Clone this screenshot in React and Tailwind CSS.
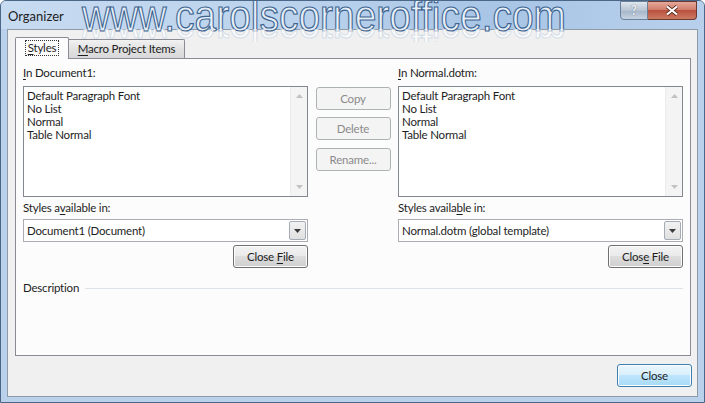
import React from "react";

const U = ({ children }) => <span className="underline underline-offset-[2px]">{children}</span>;

function Btn({ children, disabled, def, className = "" }) {
  if (disabled)
    return (
      <div className={"w-[75px] h-[23px] flex items-center justify-center rounded-[3px] border border-[#adb2b5] bg-[#f4f4f4] text-[#8b8b8b] " + className}>
        {children}
      </div>
    );
  return (
    <div
      className={
        "w-[75px] h-[23px] flex items-center justify-center rounded-[3px] border text-[#1e1e1e] shadow-[inset_0_0_0_1px_#fcfcfc] " +
        (def
          ? "border-[#3c7fb1] bg-[linear-gradient(#eaf6fd_0%,#d9f0fc_45%,#bee6fd_50%,#a7d9f5_100%)] "
          : "border-[#707070] bg-[linear-gradient(#f2f2f2_0%,#ebebeb_45%,#dddddd_50%,#cfcfcf_100%)] ") +
        className
      }
    >
      {children}
    </div>
  );
}

function ListBox() {
  return (
    <div className="w-[285px] h-[111px] border border-[#828790] bg-white flex">
      <div className="flex-1 pl-[3px] pt-[2px] leading-[13px] text-[#1e1e1e]">
        <div>Default Paragraph Font</div>
        <div>No List</div>
        <div>Normal</div>
        <div>Table Normal</div>
      </div>
      <div className="w-[17px] h-full bg-[#f4f4f4] border-l border-[#ececec] flex flex-col items-center justify-between py-[7px]">
        <svg width="7" height="4" viewBox="0 0 7 4"><path d="M0 4 L3.5 0 L7 4 Z" fill="#c2c2c2" /></svg>
        <svg width="7" height="4" viewBox="0 0 7 4"><path d="M0 0 L3.5 4 L7 0 Z" fill="#c2c2c2" /></svg>
      </div>
    </div>
  );
}

function Combo({ text }) {
  return (
    <div className="w-[285px] h-[23px] border border-[#abadb3] bg-white flex items-center">
      <div className="flex-1 pl-[3px] text-[#1e1e1e]">{text}</div>
      <div className="w-[17px] h-[19px] mr-[1px] border border-[#a5acb5] rounded-[2px] bg-[linear-gradient(#f2f2f2,#e0e0e0)] flex items-center justify-center">
        <svg width="7" height="4" viewBox="0 0 7 4"><path d="M0 0 L3.5 4 L7 0 Z" fill="#3c3c3c" /></svg>
      </div>
    </div>
  );
}

function Side({ label, avail, text, close }) {
  return (
    <div className="w-[285px] flex flex-col">
      <div className="h-[16px] flex items-center">{label}</div>
      <div className="mt-[5px]"><ListBox /></div>
      <div className="h-[16px] mt-[3px] flex items-center">{avail}</div>
      <div className="mt-[3px]"><Combo text={text} /></div>
      <div className="flex justify-end mt-[3px]"><Btn>{close}</Btn></div>
    </div>
  );
}

export default function App() {
  const wm = "www.carolscorneroffice.com";
  return (
    <div className="w-[705px] h-[403px] relative overflow-hidden bg-[#b9d1ea] text-[11.5px] tracking-[-0.2px] font-['Segoe_UI',Lato,sans-serif] border border-[#4a6787] rounded-t-[6px]">
      {/* title bar */}
      <div className="h-[28px] flex items-start bg-[linear-gradient(100deg,#c7dbf1_0%,#bcd3ed_40%,#a8c5e6_70%,#b8d0ec_100%)]">
        <div className="pl-[7px] pt-[6px] text-[13px] tracking-normal text-[#1e1e1e]">Organizer</div>
        <div className="flex-1" />
        <div className="flex mr-[7px]">
          <div className="w-[28px] h-[19px] border border-[#6b7f98] rounded-bl-[4px] bg-[linear-gradient(#dfe6ee,#b7c4d3_50%,#a5b5c8_51%,#c6d3e2)] flex items-center justify-center text-[13px] font-bold text-[#eef2f7] [text-shadow:0_0_1px_#44556b]">
            ?
          </div>
          <div className="w-[49px] h-[19px] border border-[#6b3a32] border-l-0 rounded-br-[4px] bg-[linear-gradient(#e4a99a,#d07e6b_45%,#b8523f_50%,#cc7a61)] flex items-center justify-center">
            <svg width="14" height="11" viewBox="0 0 14 11">
              <path d="M2 1.5 L12 9.5 M12 1.5 L2 9.5" stroke="#5a2a20" strokeWidth="3.6" />
              <path d="M2 1.5 L12 9.5 M12 1.5 L2 9.5" stroke="#ffffff" strokeWidth="2.2" />
            </svg>
          </div>
        </div>
      </div>

      {/* client area */}
      <div className="mx-[6px] h-[368px] border border-[#8e9aa8] bg-[#f0f0f0] flex flex-col">
        <div className="pl-[7px] flex items-end h-[28px]">
          <div className="relative z-10 h-[22px] w-[54px] border border-[#898c95] border-b-0 rounded-t-[2px] bg-[#fcfcfc] flex items-center justify-center mb-[-1px] pb-[1px]">
            <span className="px-[2px] outline outline-1 outline-dotted outline-[#333] text-[#1e1e1e] leading-[14px]"><U>S</U>tyles</span>
          </div>
          <div className="h-[19px] w-[116px] border border-[#898c95] border-l-0 border-b-0 rounded-tr-[2px] bg-[linear-gradient(#f2f2f2,#e2e2e2_50%,#d8d8d8)] flex items-center justify-center text-[#1e1e1e]">
            <span><U>M</U>acro Project Items</span>
          </div>
        </div>
        <div className="ml-[7px] mr-[6px] h-[298px] border border-[#898c95] bg-[#fcfcfc] pl-[7px] pr-[7px] pt-[6px] flex flex-col text-[#1e1e1e]">
          <div className="flex">
            <Side
              label={<span><U>I</U>n Document1:</span>}
              avail={<span>Styles a<U>v</U>ailable in:</span>}
              text="Document1 (Document)"
              close={<span>Close <U>F</U>ile</span>}
            />
            <div className="w-[91px] flex flex-col items-center pt-[22px]">
              <Btn disabled>Copy</Btn>
              <Btn disabled className="mt-[7px]">Delete</Btn>
              <Btn disabled className="mt-[8px]">Rename...</Btn>
            </div>
            <Side
              label={<span><U>I</U>n Normal.dotm:</span>}
              avail={<span>Styles availa<U>b</U>le in:</span>}
              text="Normal.dotm (global template)"
              close={<span>Clos<U>e</U> File</span>}
            />
          </div>
          <div className="mt-[12px] h-[16px] flex items-center gap-[6px]">
            <span>Description</span>
            <div className="flex-1 h-[1px] bg-[#dde3e8]" />
          </div>
        </div>
        <div className="flex justify-end pr-[5px] pt-[8px]">
          <Btn def>Close</Btn>
        </div>
      </div>

      {/* watermark */}
      <div className="absolute left-[81px] top-[-7px] pointer-events-none">
        <div className="text-[44px] leading-[44px] tracking-normal font-['Liberation_Sans',Arial,sans-serif] text-[#e6eff9] origin-left [transform:scaleX(0.885)] whitespace-nowrap [-webkit-text-stroke:1.2px_#3f6590]">
          {wm}
        </div>
      </div>
      <div className="absolute left-[81px] top-[28px] h-[13px] overflow-hidden pointer-events-none opacity-70">
        <div className="text-[44px] leading-[44px] tracking-normal font-['Liberation_Sans',Arial,sans-serif] text-white origin-left [transform:scaleX(0.885)_scaleY(-1)] whitespace-nowrap translate-y-[-22px] [-webkit-text-stroke:1px_#c9d6e4]">
          {wm}
        </div>
      </div>
    </div>
  );
}
